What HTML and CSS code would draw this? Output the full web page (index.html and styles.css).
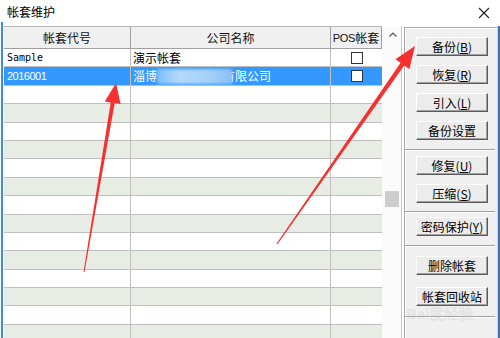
FILE: index.html
```html
<!DOCTYPE html>
<html lang="zh">
<head>
<meta charset="utf-8">
<link rel="stylesheet" href="styles.css">
</head>
<body>
<div class="page">
  <div class="titlebar">
    <span class="title">帐套维护</span>
    <svg class="close" width="12" height="12" viewBox="0 0 12 12"><path d="M1 1L11 11M11 1L1 11" stroke="#222" stroke-width="1.1" fill="none"/></svg>
  </div>
  <div class="main">
    <div class="grid">
      <div class="row head">
        <div class="c c1">帐套代号</div><div class="c c2">公司名称</div><div class="c c3"><span class="lat">POS</span>帐套</div>
      </div>
      <div class="row">
        <div class="c c1 mono">Sample</div><div class="c c2">演示帐套</div><div class="c c3"><span class="chk"></span></div>
      </div>
      <div class="row sel">
        <div class="c c1 num">2016001</div><div class="c c2">淄博<span class="blur"></span>有限公司</div><div class="c c3"><span class="chk"></span></div>
      </div>
      <div class="row"><div class="c c1"></div><div class="c c2"></div><div class="c c3"></div></div>
      <div class="row g"><div class="c c1"></div><div class="c c2"></div><div class="c c3"></div></div>
      <div class="row"><div class="c c1"></div><div class="c c2"></div><div class="c c3"></div></div>
      <div class="row g"><div class="c c1"></div><div class="c c2"></div><div class="c c3"></div></div>
      <div class="row"><div class="c c1"></div><div class="c c2"></div><div class="c c3"></div></div>
      <div class="row g"><div class="c c1"></div><div class="c c2"></div><div class="c c3"></div></div>
      <div class="row"><div class="c c1"></div><div class="c c2"></div><div class="c c3"></div></div>
      <div class="row g"><div class="c c1"></div><div class="c c2"></div><div class="c c3"></div></div>
      <div class="row"><div class="c c1"></div><div class="c c2"></div><div class="c c3"></div></div>
      <div class="row g"><div class="c c1"></div><div class="c c2"></div><div class="c c3"></div></div>
      <div class="row"><div class="c c1"></div><div class="c c2"></div><div class="c c3"></div></div>
      <div class="row g"><div class="c c1"></div><div class="c c2"></div><div class="c c3"></div></div>
      <div class="row"><div class="c c1"></div><div class="c c2"></div><div class="c c3"></div></div>
      <div class="row g"><div class="c c1"></div><div class="c c2"></div><div class="c c3"></div></div>
    </div>
    <div class="vscroll">
      <div class="sb-head">
        <svg width="8" height="5" viewBox="0 0 8 5"><path d="M0.5 4.5L4 1L7.5 4.5" stroke="#555" stroke-width="1.2" fill="none"/></svg>
      </div>
      <div class="sb-track"><div class="thumb"></div></div>
    </div>
    <div class="panel">
      <div class="group g1">
        <div class="btn">备份(<u>B</u>)</div>
        <div class="btn">恢复(<u>R</u>)</div>
        <div class="btn">引入(<u>L</u>)</div>
        <div class="btn">备份设置</div>
      </div>
      <div class="sep"></div>
      <div class="group g2">
        <div class="btn">修复(<u>U</u>)</div>
        <div class="btn">压缩(<u>S</u>)</div>
      </div>
      <div class="sep"></div>
      <div class="group g3">
        <div class="btn">密码保护(<u>Y</u>)</div>
      </div>
      <div class="sep"></div>
      <div class="group g4">
        <div class="btn">删除帐套</div>
        <div class="btn">帐套回收站</div>
      </div>
      <div class="sep"></div>
    </div>
    <div class="edge"></div>
  </div>
  <div class="watermark">Bai度经验</div>
  <svg class="arrows" width="500" height="338" viewBox="0 0 500 338">
    <polygon fill="#f7302f" points="83.5,271.9 110.7,102.4 104.8,101.4 116,83 120.6,104.0 114.7,103.0 84.5,272.1"/>
    <polygon fill="#f7302f" points="276.5,243.7 400.6,62.8 395.4,59.2 415,46 409.4,69.0 404.2,65.4 277.5,244.3"/>
  </svg>
</div>
</body>
</html>
```

FILE: styles.css
```css
* { box-sizing: border-box; }
html, body { margin: 0; padding: 0; }
body {
  width: 500px;
  height: 338px;
  overflow: hidden;
  background: #fff;
  font-family: "Noto Sans CJK SC", "Noto Sans", sans-serif;
  font-size: 12px;
  color: #000;
}
.page {
  position: relative;
  width: 500px;
  height: 338px;
  overflow: hidden;
}
.titlebar {
  height: 22px;
  display: flex;
  align-items: center;
  justify-content: space-between;
  padding: 0 10px 0 7px;
}
.title { font-size: 12px; line-height: 14px; margin-top: 2px; }
.close { margin-top: 4px; }

.main {
  display: flex;
  height: 316px;
  margin-left: 1px;
  border-left: 2px solid #3b8de2;
  padding-top: 4px;
}
.grid {
  width: 378px;
  margin-left: 1px;
  flex: none;
}
.row {
  display: grid;
  grid-template-columns: 127px 200px 51px;
  height: 18.4px;
  border-bottom: 1px solid #bfbfbf;
  background: #fff;
}
.row.g { background: #e7ede4; }
.row.sel { background: #3399ff; color: #fff; }
.row.head {
  height: 23px;
  background: #f0f0f0;
  border-top: 1px solid #b8b8b8;
  border-bottom: 1px solid #a0a0a0;
}
.c {
  border-right: 1px solid #c0c0c0;
  display: flex;
  align-items: center;
  padding-left: 2px;
  white-space: nowrap;
  overflow: hidden;
  line-height: 14px;
}
.c3 { border-right: none; justify-content: center; padding-left: 0; }
.head .c { justify-content: center; padding-left: 0; border-right-color: #a0a0a0; color: #111; }
.head .c3 { border-right: 1px solid #a0a0a0; }
.lat {
  font-family: "Liberation Sans", sans-serif;
  font-size: 11px;
  letter-spacing: -0.3px;
}
.mono {
  font-family: "DejaVu Sans Mono", "Liberation Mono", monospace;
  font-size: 10px;
  padding-left: 3px;
}
.num {
  font-family: "Liberation Sans", sans-serif;
  font-size: 11px;
  letter-spacing: -0.5px;
  padding-left: 3px;
}
.chk {
  width: 12px;
  height: 12px;
  border: 1px solid #333;
  background: #fff;
  display: block;
}
.blur {
  display: inline-block;
  position: relative;
  z-index: 1;
  width: 75px;
  height: 15px;
  margin-right: -9px;
  background: linear-gradient(90deg, #7fbdf6, #b4d9fb 30%, #a6d0f9 70%, #86c0f6);
  filter: blur(1.5px);
}

.vscroll {
  width: 20px;
  flex: none;
  border-right: 1px solid #c8c8c8;
  background: #fbfbfb;
  display: flex;
  flex-direction: column;
}
.sb-head {
  height: 20px;
  display: flex;
  justify-content: center;
  padding-top: 6px;
  padding-left: 2px;
}
.sb-track { flex: 1; padding-top: 145px; display: flex; justify-content: center; }
.thumb {
  width: 14px;
  height: 16px;
  background: #cdcdcd;
}

.panel {
  width: 93px;
  flex: none;
  margin-left: 2px;
  margin-top: 1px;
  background: #f0f0f0;
  border-left: 1px solid #a9a9a9;
  border-top: 1px solid #a9a9a9;
  box-shadow: inset 1px 1px 0 #fff;
  display: flex;
  flex-direction: column;
}
.group {
  display: flex;
  flex-direction: column;
  gap: 9px;
  padding-left: 11px;
}
.g1 { padding-top: 9px; padding-bottom: 9px; }
.g2 { padding-top: 5px; padding-bottom: 8px; }
.g3 { padding-top: 4px; padding-bottom: 9px; }
.g4 { padding-top: 9px; padding-bottom: 10px; gap: 12px; }
.btn {
  width: 72px;
  height: 19px;
  background: #ececec;
  border-top: 1px solid #fff;
  border-left: 1px solid #fff;
  border-right: 1px solid #5a5a5a;
  border-bottom: 1px solid #5a5a5a;
  box-shadow: inset -1px -1px 0 #a0a0a0;
  display: flex;
  align-items: center;
  justify-content: center;
  font-size: 12px;
  line-height: 14px;
  white-space: nowrap;
}
.btn u { text-underline-offset: 1px; }
.sep {
  height: 2px;
  border-top: 1px solid #a0a0a0;
  border-bottom: 1px solid #fff;
  margin-right: 2px;
}
.edge {
  flex: 1;
  border-left: 1px solid #d8d8d8;
  background: #3c6fb5;
}
.watermark {
  position: absolute;
  left: 406px;
  top: 306px;
  font-family: "Liberation Sans", sans-serif;
  font-size: 15px;
  line-height: 16px;
  font-weight: bold;
  color: rgba(200, 200, 200, 0.35);
  white-space: nowrap;
}
.arrows {
  position: absolute;
  left: 0;
  top: 0;
  pointer-events: none;
}
```
